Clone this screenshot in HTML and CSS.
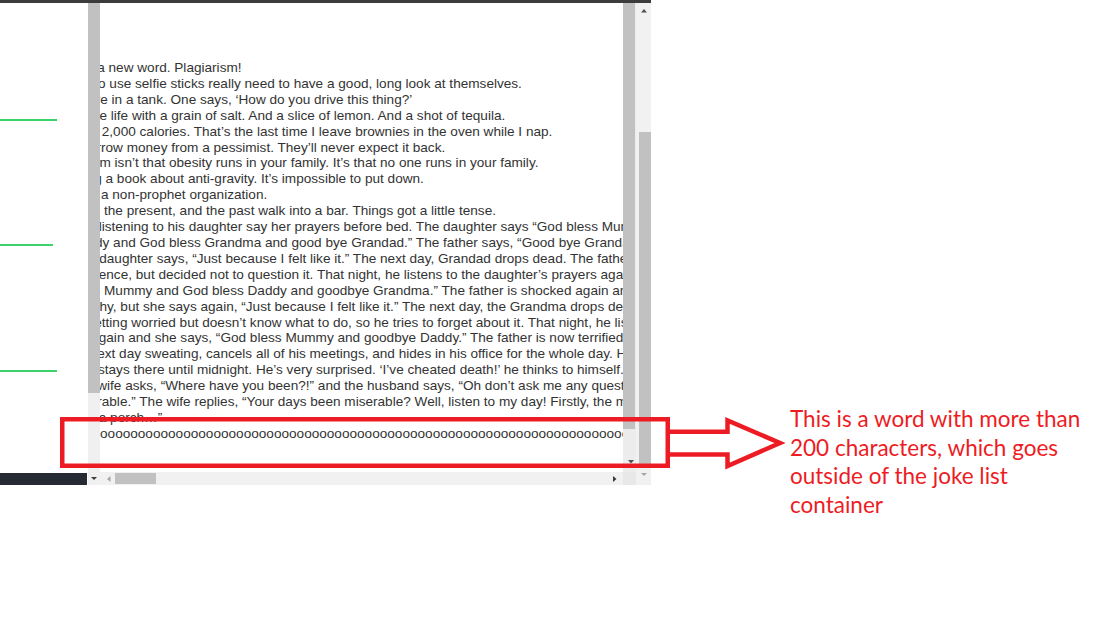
FILE: index.html
```html
<!DOCTYPE html>
<html lang="en">
<head>
<meta charset="utf-8">
<title>Joke list overflow</title>
<link rel="stylesheet" href="styles.css">
</head>
<body>
<div class="page">
  <div class="shot">
    <div class="topbar"></div>
    <div class="shot-body">
      <div class="sidebar">
        <span class="nav-line nav-line-1"></span>
        <span class="nav-line nav-line-2"></span>
        <span class="nav-line nav-line-3"></span>
        <span class="sidebar-foot"></span>
      </div>
      <div class="frame">
        <div class="frame-main">
          <div class="gutter"><span class="gutter-thumb"></span></div>
          <div class="list">
            <ul class="jokes">
              <li>I invented a new word. Plagiarism!</li>
              <li>People who use selfie sticks really need to have a good, long look at themselves.</li>
              <li>Two fish are in a tank. One says, ‘How do you drive this thing?’</li>
              <li>Always take life with a grain of salt. And a slice of lemon. And a shot of tequila.</li>
              <li>I just burnt 2,000 calories. That’s the last time I leave brownies in the oven while I nap.</li>
              <li>Always borrow money from a pessimist. They’ll never expect it back.</li>
              <li>The problem isn’t that obesity runs in your family. It’s that no one runs in your family.</li>
              <li>I’m reading a book about anti-gravity. It’s impossible to put down.</li>
              <li>Atheism is a non-prophet organization.</li>
              <li>The future, the present, and the past walk into a bar. Things got a little tense.</li>
              <li>
                <span class="ln">A father is listening to his daughter say her prayers before bed. The daughter says “God bless Mummy and God</span>
                <span class="ln">bless Daddy and God bless Grandma and good bye Grandad.” The father says, “Good bye Grandad? Good</span>
                <span class="ln">bye?” The daughter says, “Just because I felt like it.” The next day, Grandad drops dead. The father thinks it is a</span>
                <span class="ln">big coincidence, but decided not to question it. That night, he listens to the daughter’s prayers again. She says,</span>
                <span class="ln">“God bless Mummy and God bless Daddy and goodbye Grandma.” The father is shocked again and</span>
                <span class="ln">asks her why, but she says again, “Just because I felt like it.” The next day, the Grandma drops dead. The</span>
                <span class="ln">father is getting worried but doesn’t know what to do, so he tries to forget about it. That night, he listens</span>
                <span class="ln">in on her again and she says, “God bless Mummy and goodbye Daddy.” The father is now terrified. He goes to</span>
                <span class="ln">work the next day sweating, cancels all of his meetings, and hides in his office for the whole day. He is so</span>
                <span class="ln">scared he stays there until midnight. He’s very surprised. ‘I’ve cheated death!’ he thinks to himself. When he gets</span>
                <span class="ln">home, his wife asks, “Where have you been?!” and the husband says, “Oh don’t ask me any questions, my day has</span>
                <span class="ln">been miserable.” The wife replies, “Your days been miserable? Well, listen to my day! Firstly, the milkman dropped dead</span>
                <span class="ln">dead onto a porch…”</span>
              </li>
              <li class="long-word">Woooooooooooooooooooooooooooooooooooooooooooooooooooooooooooooooooooooooooooooooooooooooooooooooooooooooooooooooooooooooooooooooooooooooooooooooooooooooooooooooooooooooooooooooooooooooooooooooooooooooooooooooooooooooooooooooooooooord</li>
            </ul>
          </div>
          <div class="vbar">
            <span class="vbar-thumb"></span>
            <svg class="vbar-arrow" width="6" height="4" viewBox="0 0 6 4"><path d="M0 0H6L3 3.5Z" fill="#505050"/></svg>
          </div>
        </div>
        <div class="hbar">
          <div class="hbar-cell">
            <svg width="6" height="3" viewBox="0 0 6 3"><path d="M0 0H6L3 3Z" fill="#3a3a3a"/></svg>
          </div>
          <div class="hbar-track">
            <svg class="arrow-left" width="4" height="6" viewBox="0 0 4 6"><path d="M3.5 0V6L0 3Z" fill="#a6a6a6"/></svg>
            <span class="hbar-thumb"></span>
            <svg class="arrow-right" width="4" height="6" viewBox="0 0 4 6"><path d="M0 0V6L3.5 3Z" fill="#3a3a3a"/></svg>
          </div>
          <div class="hbar-corner"></div>
        </div>
      </div>
      <div class="outer-vbar">
        <svg class="arrow-up" width="6" height="4" viewBox="0 0 6 4"><path d="M0 3.5H6L3 0Z" fill="#505050"/></svg>
        <span class="outer-thumb"></span>
        <svg class="arrow-down" width="6" height="3" viewBox="0 0 6 3"><path d="M0 0H6L3 3Z" fill="#a6a6a6"/></svg>
      </div>
    </div>
  </div>

  <p class="note">This is a word with more than<br>200 characters, which goes<br>outside of the joke list<br>container</p>

  <svg class="annotation" width="1116" height="636" viewBox="0 0 1116 636">
    <rect x="62.25" y="419.25" width="605.5" height="46.5" fill="none" stroke="#ed1c24" stroke-width="4.5"/>
    <polyline points="668,431.7 727.5,431.7 727.5,420.5 780,443 727.5,466 727.5,454.4 668,454.4" fill="none" stroke="#ed1c24" stroke-width="4.5" stroke-miterlimit="10"/>
  </svg>
</div>
</body>
</html>
```

FILE: styles.css
```css
html, body {
  margin: 0;
  padding: 0;
  background: #ffffff;
}

.page {
  position: relative;
  width: 1116px;
  height: 636px;
  display: flex;
  align-items: flex-start;
  overflow: hidden;
}

.shot {
  width: 651px;
  display: flex;
  flex-direction: column;
  flex: none;
}

.topbar {
  height: 3px;
  background: #3c3c3c;
}

.shot-body {
  display: flex;
  height: 482px;
}

/* left sidebar */
.sidebar {
  width: 88px;
  display: flex;
  flex-direction: column;
  align-items: flex-start;
}

.nav-line {
  display: block;
  height: 2px;
  background: #3dd36c;
}

.nav-line-1 { width: 57px; margin-top: 116px; }
.nav-line-2 { width: 53px; margin-top: 123px; }
.nav-line-3 { width: 57px; margin-top: 124px; }

.sidebar-foot {
  display: block;
  margin-top: auto;
  width: 87px;
  height: 12px;
  background: #262a33;
}

/* framed joke list */
.frame {
  width: 548px;
  display: flex;
  flex-direction: column;
}

.frame-main {
  height: 469px;
  display: flex;
}

.gutter {
  width: 12px;
  background: #f0f0f0;
}

.gutter-thumb {
  display: block;
  height: 390px;
  background: #c1c1c1;
}

.list {
  width: 523px;
  overflow: hidden;
  background: #ffffff;
}

.jokes {
  list-style: none;
  margin: 0 0 0 -65.5px;
  padding: 57px 0 0;
  font-family: "Liberation Sans", Arial, sans-serif;
  font-size: 13.6px;
  line-height: 15.9px;
  color: #333333;
  white-space: nowrap;
}

.jokes .ln {
  display: block;
}

.vbar {
  width: 13px;
  background: #ececec;
  display: flex;
  flex-direction: column;
  align-items: flex-start;
}

.vbar-thumb {
  display: block;
  width: 12px;
  height: 426px;
  background: #c1c1c1;
}

.vbar-arrow {
  margin: 31px 0 0 5px;
}

/* horizontal scrollbar */
.hbar {
  height: 13px;
  display: flex;
  background: #f1f1f1;
}

.hbar-cell {
  width: 12px;
  display: flex;
  justify-content: center;
  align-items: center;
  background: #f0f0f0;
}

.hbar-track {
  width: 523px;
  display: flex;
  align-items: center;
}

.arrow-left {
  margin-left: 7px;
}

.hbar-thumb {
  display: block;
  width: 41px;
  height: 11px;
  margin-left: 4px;
  background: #c1c1c1;
}

.arrow-right {
  margin-left: auto;
  margin-right: 6px;
}

.hbar-corner {
  width: 13px;
  background: #e8e8e8;
}

/* outer page scrollbar */
.outer-vbar {
  width: 15px;
  background: #f1f1f1;
  display: flex;
  flex-direction: column;
  align-items: center;
}

.arrow-up {
  margin-top: 6px;
  margin-left: 1px;
}

.outer-thumb {
  display: block;
  width: 12px;
  height: 335px;
  margin-top: 119px;
  margin-left: 2px;
  background: #c1c1c1;
}

.arrow-down {
  margin-top: 6px;
  margin-left: 1px;
}

/* annotation */
.note {
  margin: 405px 0 0 139px;
  font-family: Lato, "Open Sans", sans-serif;
  font-size: 22.5px;
  line-height: 28.6px;
  color: #ed1c24;
  white-space: nowrap;
}

.annotation {
  position: absolute;
  left: 0;
  top: 0;
  pointer-events: none;
}
```
